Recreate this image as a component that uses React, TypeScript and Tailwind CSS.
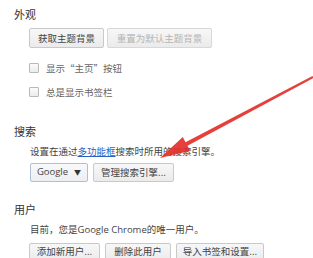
import React from 'react';

const Btn = ({ label, w, disabled = false, extra = '' }: { label: string; w: string; disabled?: boolean; extra?: string }) => (
    <div
        className={`${w} h-[20px] flex items-center justify-center rounded-[2px] border border-[#c9c9c9] bg-gradient-to-b from-[#f7f7f7] to-[#ebebeb] text-[9.5px] ${
            disabled ? 'text-[#b4b4b4] border-[#d8d8d8]' : 'text-[#444]'
        } ${extra}`}
    >
        {label}
    </div>
);

const Check = ({ label }: { label: string }) => (
    <div className="flex items-center h-[16px] gap-[7px]">
        <div className="w-[10px] h-[10px] rounded-[1px] border border-[#b8b8b8] bg-gradient-to-b from-[#fafafa] to-[#ececec]" />
        <span className="text-[9.5px] text-[#666]">{label}</span>
    </div>
);

const Heading = ({ children }: { children: React.ReactNode }) => (
    <div className="h-[16px] leading-[16px] text-[11px] text-[#333]">{children}</div>
);

export default function App() {
    return (
        <div
            className="relative w-[313px] h-[258px] overflow-hidden bg-white"
            style={{ fontFamily: '"Noto Sans CJK SC", "Liberation Sans", sans-serif' }}
        >
            <div className="pl-[14px] pt-[6px]">
                <Heading>外观</Heading>
                <div className="pl-[15px]">
                    <div className="mt-[6px] flex gap-[3px]">
                        <Btn label="获取主题背景" w="w-[75px]" />
                        <Btn label="重置为默认主题背景" w="w-[105px]" disabled />
                    </div>
                    <div className="mt-[12px]">
                        <Check label="显示“主页”按钮" />
                    </div>
                    <div className="mt-[8px]">
                        <Check label="总是显示书签栏" />
                    </div>
                </div>

                <div className="mt-[23px]">
                    <Heading>搜索</Heading>
                </div>
                <div className="pl-[16px]">
                    <div className="mt-[4px] h-[16px] leading-[16px] text-[9.5px] text-[#444]">
                        设置在通过<span className="text-[#2a5fc9] underline">多功能框</span>搜索时所用的搜索引擎。
                    </div>
                    <div className="mt-[4px] flex gap-[5px]">
                        <div className="w-[58px] h-[19px] flex items-center justify-center gap-[6px] rounded-[2px] border border-[#aebfd6] bg-gradient-to-b from-[#f8f9fb] to-[#eceef2] text-[9.5px] text-[#444]">
                            <span style={{ fontFamily: '"Open Sans", "Liberation Sans", sans-serif' }}>Google</span>
                            <span className="text-[7px] text-[#333]">▼</span>
                        </div>
                        <div className="w-[81px] h-[19px] flex items-center justify-center rounded-[2px] border border-[#c9c9c9] bg-gradient-to-b from-[#f7f7f7] to-[#ebebeb] text-[9.5px] text-[#444]">
                            管理搜索引擎...
                        </div>
                    </div>
                </div>

                <div className="mt-[19px]">
                    <Heading>用户</Heading>
                </div>
                <div className="pl-[16px]">
                    <div className="mt-[4px] h-[16px] leading-[16px] text-[9.5px] text-[#444]">
                        目前，您是<span style={{ fontFamily: '"Open Sans", "Liberation Sans", sans-serif' }}>Google Chrome</span>的唯一用户。
                    </div>
                    <div className="mt-[6px] flex gap-[5px] -ml-[1px]">
                        <Btn label="添加新用户..." w="w-[71px]" extra="pb-[3px]" />
                        <Btn label="删除此用户" w="w-[66px]" extra="pb-[3px]" />
                        <Btn label="导入书签和设置..." w="w-[88px]" extra="pb-[3px]" />
                    </div>
                </div>
            </div>

            <svg className="absolute left-0 top-0 pointer-events-none" width="313" height="258" viewBox="0 0 313 258">
                <polygon
                    points="313.5,78 312.5,76 185.5,142.2 182.8,136.9 160,158 190.2,151.1 187.5,145.8"
                    fill="#e3312b"
                    opacity="0.92"
                />
            </svg>
        </div>
    );
}
